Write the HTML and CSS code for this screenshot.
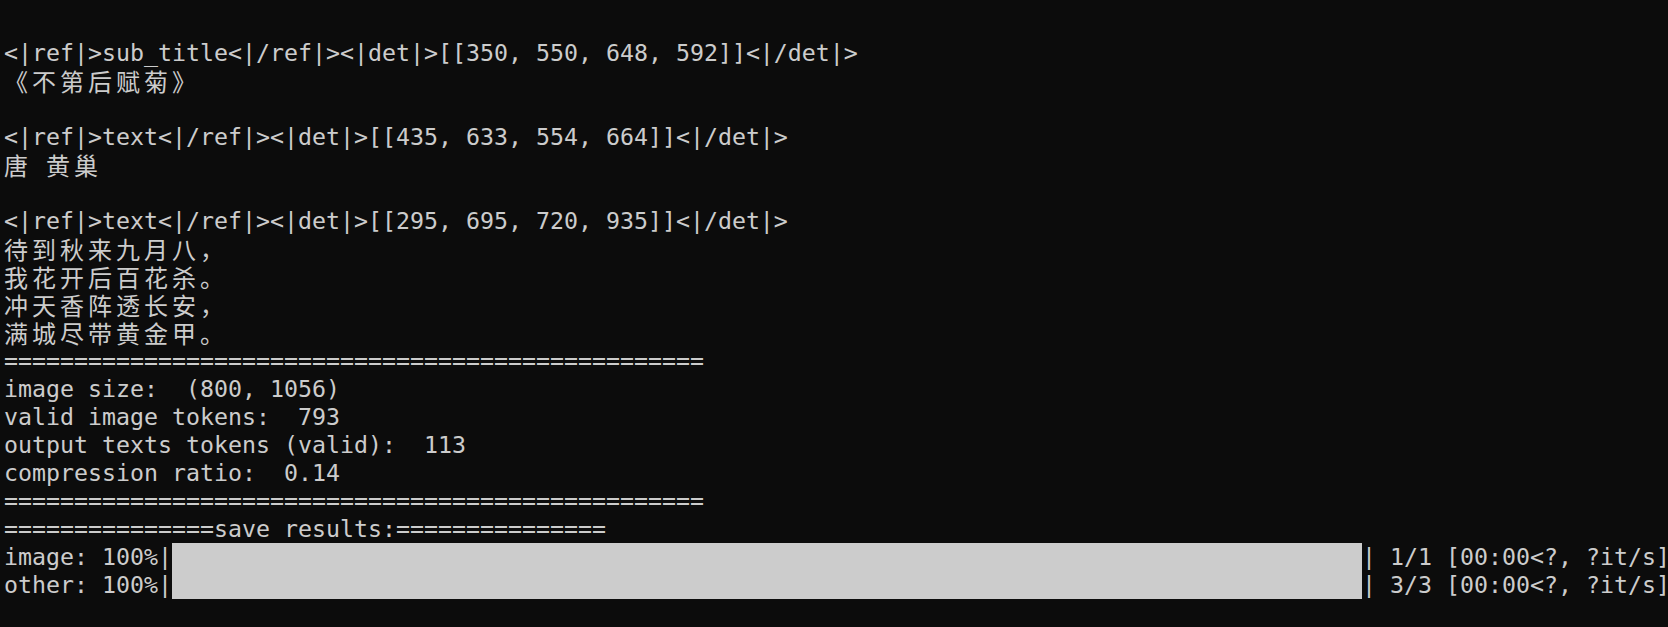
FILE: index.html
```html
<!DOCTYPE html>
<html lang="zh-CN">
<head>
<meta charset="utf-8">
<title>Terminal</title>
<link rel="stylesheet" href="styles.css">
</head>
<body>
<div class="term">
<div class="ln"> </div>
<div class="ln">&lt;|ref|&gt;sub_title&lt;|/ref|&gt;&lt;|det|&gt;[[350, 550, 648, 592]]&lt;|/det|&gt;</div>
<div class="ln"><span class="cjk">《不第后赋菊》</span></div>
<div class="ln"> </div>
<div class="ln">&lt;|ref|&gt;text&lt;|/ref|&gt;&lt;|det|&gt;[[435, 633, 554, 664]]&lt;|/det|&gt;</div>
<div class="ln"><span class="cjk">唐</span> <span class="cjk">黄巢</span></div>
<div class="ln"> </div>
<div class="ln">&lt;|ref|&gt;text&lt;|/ref|&gt;&lt;|det|&gt;[[295, 695, 720, 935]]&lt;|/det|&gt;</div>
<div class="ln"><span class="cjk">待到秋来九月八，</span></div>
<div class="ln"><span class="cjk">我花开后百花杀。</span></div>
<div class="ln"><span class="cjk">冲天香阵透长安，</span></div>
<div class="ln"><span class="cjk">满城尽带黄金甲。</span></div>
<div class="ln">==================================================</div>
<div class="ln">image size:  (800, 1056)</div>
<div class="ln">valid image tokens:  793</div>
<div class="ln">output texts tokens (valid):  113</div>
<div class="ln">compression ratio:  0.14</div>
<div class="ln">==================================================</div>
<div class="ln">===============save results:===============</div>
<div class="ln">image: 100%|<span class="bar"></span>| 1/1 [00:00&lt;?, ?it/s]</div>
<div class="ln">other: 100%|<span class="bar"></span>| 3/3 [00:00&lt;?, ?it/s]</div>
</div>
</body>
</html>
```
FILE: styles.css
```css
html, body {
  margin: 0;
  padding: 0;
  background: #0c0c0c;
}
body {
  width: 1668px;
  height: 627px;
  overflow: hidden;
}
.term {
  padding: 11px 0 0 4px;
  color: #cccccc;
  font-family: "DejaVu Sans Mono", "Liberation Mono", monospace;
  font-size: 23.25px;
}
.ln {
  height: 28px;
  line-height: 28px;
  white-space: pre;
}
.cjk {
  display: inline-block;
  height: 28px;
  vertical-align: top;
  font-family: "Noto Sans CJK SC", sans-serif;
  font-size: 24px;
  letter-spacing: 4px;
  line-height: 28px;
}
.bar {
  display: inline-block;
  width: 1190px;
  height: 28px;
  background: #cccccc;
  vertical-align: top;
}
```
